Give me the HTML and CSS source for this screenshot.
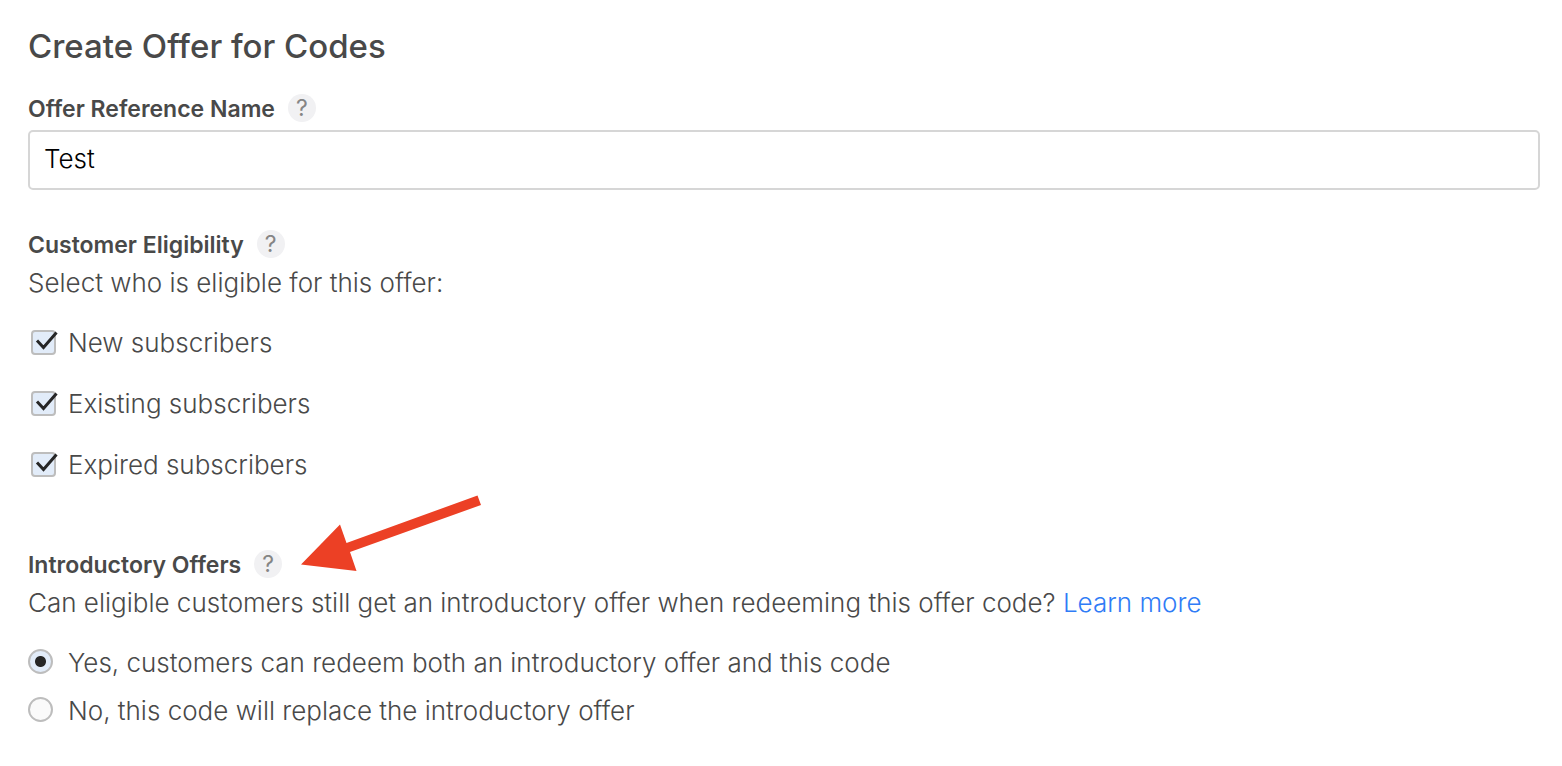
FILE: index.html
```html
<!DOCTYPE html>
<html lang="en">
  <head>
    <meta charset="utf-8" />
    <title>Create Offer for Codes</title>
    <link rel="stylesheet" href="styles.css">
  </head>
  <body>
    <form class="offer-form">
      <h1>Create Offer for Codes</h1>

      <!-- Reference name -->
      <section class="name-section">
        <div class="field-title">
          <label for="offerName">Offer Reference Name</label>
          <button type="button" class="help" aria-label="About the reference name">?</button>
        </div>
        <input type="text" id="offerName" class="text-field" value="Test">
      </section>

      <!-- Customer eligibility -->
      <section class="eligibility-section">
        <div class="field-title">
          <h2>Customer Eligibility</h2>
          <button type="button" class="help" aria-label="About customer eligibility">?</button>
        </div>
        <p>Select who is eligible for this offer:</p>
        <div class="checkbox-list">
          <label class="option"><input type="checkbox" checked><span>New subscribers</span></label>
          <label class="option"><input type="checkbox" checked><span>Existing subscribers</span></label>
          <label class="option"><input type="checkbox" checked><span>Expired subscribers</span></label>
        </div>
      </section>

      <!-- Introductory offers -->
      <section class="intro-section">
        <div class="field-title">
          <h2>Introductory Offers</h2>
          <button type="button" class="help" aria-label="About introductory offers">?</button>
          <svg class="arrow" width="180" height="78" viewBox="0 0 180 78" aria-hidden="true">
            <path d="M0 70.5L39 30.5L45.5 49L176.5 1.5L180 11L49 58L55.5 77Z" fill="#ec4025"/>
          </svg>
        </div>
        <p>Can eligible customers still get an introductory offer when redeeming this offer code? <a href="#">Learn more</a></p>
        <div class="radio-list">
          <label class="option"><input type="radio" name="intro" checked><span>Yes, customers can redeem both an introductory offer and this code</span></label>
          <label class="option"><input type="radio" name="intro"><span>No, this code will replace the introductory offer</span></label>
        </div>
      </section>
    </form>
  </body>
</html>
```
FILE: styles.css
```css
body {
  margin: 0;
  background: #fff;
  color: #494949;
  font-family: Inter, "Liberation Sans", sans-serif;
  font-size: 26px;
  font-weight: 300;
  line-height: 36px;
}

.offer-form {
  padding: 24px 22px 36px 28px;
}

h1 {
  margin: 0 0 22px;
  font-size: 33px;
  font-weight: 500;
  line-height: 44px;
}

p {
  margin: 3px 0 0;
}

a {
  color: #2f7cf6;
  text-decoration: none;
}

/* Field titles with the round help button */
.field-title {
  position: relative;
  display: flex;
  align-items: center;
  gap: 13px;
  height: 36px;
}

.field-title h2,
.field-title label {
  margin: 0;
  padding-top: 2px;
  font-size: 23px;
  font-weight: 600;
}

.help {
  width: 28px;
  height: 28px;
  padding: 0;
  border: none;
  border-radius: 50%;
  background: #f1f1f3;
  color: #858585;
  font: 400 23px/28px Inter, "Liberation Sans", sans-serif;
  cursor: pointer;
}

.text-field {
  display: block;
  box-sizing: border-box;
  width: 100%;
  height: 60px;
  margin-top: 4px;
  padding: 0 14px 4px;
  border: 2px solid #d6d6d6;
  border-radius: 5px;
  color: #000;
  font: inherit;
}

.eligibility-section {
  margin-top: 36px;
}

.intro-section {
  margin-top: 63px;
}

/* Checkboxes and radios */
.checkbox-list {
  display: flex;
  flex-direction: column;
  gap: 25px;
  margin-top: 24px;
}

.radio-list {
  display: flex;
  flex-direction: column;
  gap: 12px;
  margin-top: 24px;
}

.option {
  display: flex;
  align-items: center;
}

.option input {
  appearance: none;
  box-sizing: border-box;
  flex: none;
  width: 25px;
  height: 25px;
  border: 2px solid #bdbdbd;
  background: #fafafa;
}

.option input:checked {
  background: #e2ecf9;
}

.option input[type="checkbox"] {
  position: relative;
  margin: 0 12px 1px 3px;
  border-radius: 4px;
}

/* The tick reaches a little past the box */
.option input[type="checkbox"]:checked::before {
  content: "";
  position: absolute;
  top: -2px;
  left: 2px;
  width: 24px;
  height: 22px;
  background: url("data:image/svg+xml,%3Csvg xmlns='http://www.w3.org/2000/svg' viewBox='0 0 24 22'%3E%3Cpath d='M2 10.5L8.5 17.5L21.5 2.5' fill='none' stroke='%23262626' stroke-width='3'/%3E%3C/svg%3E") no-repeat;
}

.option input[type="radio"] {
  margin: 0 15px 3px 0;
  border-radius: 50%;
}

.option input[type="radio"]:checked {
  background: radial-gradient(circle, #262626 5px, #e2ecf9 6px);
}

/* Arrow pointing at the help button */
.arrow {
  position: absolute;
  left: 273px;
  bottom: 10px;
}
```
